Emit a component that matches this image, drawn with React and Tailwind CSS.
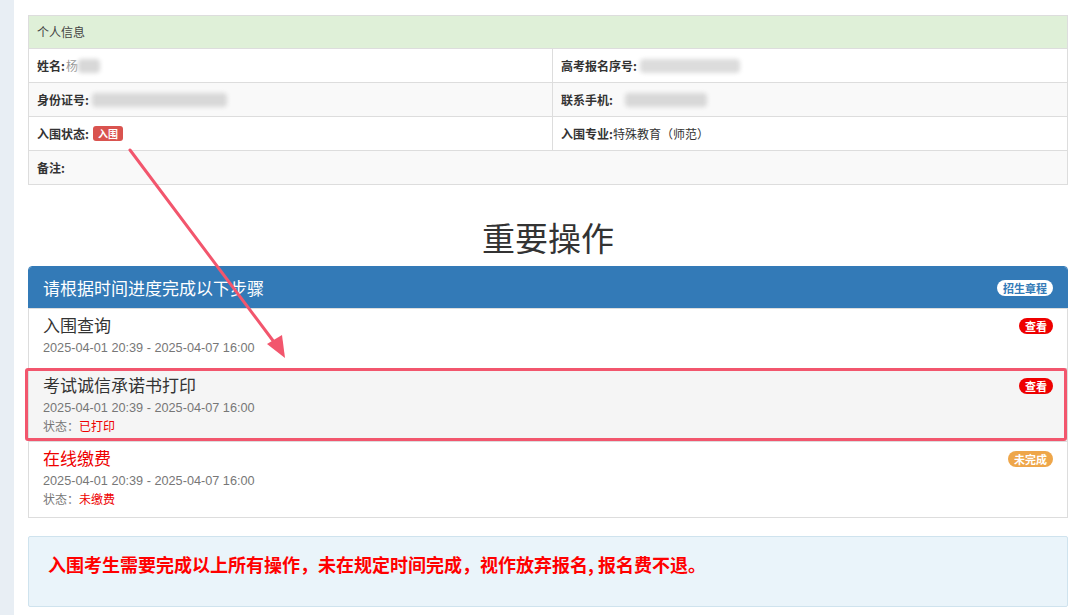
import React from 'react'

const font = { fontFamily: '"Noto Sans CJK SC", "Liberation Sans", sans-serif' }

function Blur({ w, shade = 'bg-[#d8d8d8]' }) {
  return <span className={`inline-block h-[14px] align-middle ${shade} blur-[2px] rounded-sm`} style={{ width: w }} />
}

function Cell({ children, className = '' }) {
  return <div className={`flex items-center h-[33px] px-2 text-[12px] text-[#333] ${className}`}>{children}</div>
}

function Step({ title, titleColor, badge, badgeColor, status, highlight, pb = 'pb-[10px]' }) {
  return (
    <div className={`relative px-[14px] pt-[5px] ${pb} border-t border-[#ddd] ${highlight ? 'bg-[#f5f5f5]' : 'bg-white'}`}>
      <div className="flex items-start justify-between">
        <div className={`text-[17px] leading-[22px] ${titleColor}`}>{title}</div>
        <span className={`mt-[4px] px-[6px] h-[16px] leading-[16px] rounded-full text-[11px] font-bold text-white ${badgeColor}`}>{badge}</span>
      </div>
      <div className="mt-[4px] text-[12.7px] leading-[17px] text-[#777]" style={{ fontFamily: '"Liberation Sans", "Noto Sans CJK SC", sans-serif' }}>
        2025-04-01 20:39 - 2025-04-07 16:00
      </div>
      {status && (
        <div className="text-[12px] leading-[17px] text-[#777]">
          状态：<span className="text-[#e00]">{status}</span>
        </div>
      )}
      {highlight && (
        <div className="absolute -left-[4px] right-0 -top-[1px] bottom-0 border-[3px] border-[#f2566d] rounded-[3px] pointer-events-none" />
      )}
    </div>
  )
}

export default function App() {
  return (
    <div className="relative flex min-h-[615px] bg-white overflow-hidden" style={font}>
      <div className="w-[14px] shrink-0 bg-[#e8eef4]" />
      <div className="flex-1 pl-[14px] pr-[12px] pt-[15px]">
        {/* 个人信息 */}
        <div className="border border-[#ddd]">
          <div className="h-[32px] flex items-center px-2 bg-[#dff0d8] text-[12px] text-[#444]">个人信息</div>
          <div className="grid grid-cols-[523px_1fr] border-t border-[#ddd] bg-white">
            <Cell className="font-bold">姓名:<span className="font-normal text-[#999] ml-[1px]">杨</span><Blur w={22} /></Cell>
            <Cell className="border-l border-[#ddd] font-bold">高考报名序号:<span className="ml-[3px]" /><Blur w={100} shade="bg-[#dcdcdc]" /></Cell>
          </div>
          <div className="grid grid-cols-[523px_1fr] border-t border-[#ddd] bg-[#f9f9f9]">
            <Cell className="font-bold">身份证号:<span className="ml-[3px]" /><Blur w={135} /></Cell>
            <Cell className="border-l border-[#ddd] font-bold">联系手机:<span className="ml-[12px]" /><Blur w={82} /></Cell>
          </div>
          <div className="grid grid-cols-[523px_1fr] border-t border-[#ddd] bg-white">
            <Cell className="font-bold">
              入围状态:
              <span className="ml-[4px] px-[5px] h-[15px] leading-[15px] rounded-[3px] bg-[#d9534f] text-white text-[10px]">入围</span>
            </Cell>
            <Cell className="border-l border-[#ddd]"><span className="font-bold">入围专业:</span>特殊教育（师范）</Cell>
          </div>
          <div className="border-t border-[#ddd] bg-[#f9f9f9]">
            <Cell className="font-bold">备注:</Cell>
          </div>
        </div>

        <h1 className="mt-[33px] mb-[10px] text-center text-[33px] leading-[38px] text-[#333]">重要操作</h1>

        {/* 步骤 */}
        <div className="border border-[#337ab7] rounded-t-[4px]">
          <div className="h-[41px] flex items-center justify-between pl-[14px] pr-[14px] bg-[#337ab7] rounded-t-[3px]">
            <span className="text-[17px] text-white">请根据时间进度完成以下步骤</span>
            <span className="px-[6px] h-[16px] leading-[16px] rounded-full bg-white text-[#337ab7] text-[11px] font-bold">招生章程</span>
          </div>
          <div className="border-x border-b border-[#ddd] -mx-px -mb-px">
            <Step title="入围查询" titleColor="text-[#333]" badge="查看" badgeColor="bg-[#e00]" pb="pb-[11px]" />
            <Step title="考试诚信承诺书打印" titleColor="text-[#333]" badge="查看" badgeColor="bg-[#e00]" status="已打印" highlight pb="pb-[7px]" />
            <Step title="在线缴费" titleColor="text-[#e00]" badge="未完成" badgeColor="bg-[#eea64a]" status="未缴费" pb="pb-[10px]" />
          </div>
        </div>

        <div className="mt-[18px] h-[71px] flex items-center pl-[19px] bg-[#eaf4fa] border border-[#cfe3ee] rounded-[2px]">
          <span className="text-[18px] font-bold text-[#f00] -mt-[14px]">入围考生需要完成以上所有操作，未在规定时间完成，视作放弃报名, 报名费不退。</span>
        </div>
      </div>

      {/* 标注箭头 */}
      <svg className="absolute left-0 top-0 pointer-events-none" width="1080" height="615">
        <line x1="130" y1="150" x2="277" y2="346" stroke="#f2566d" strokeWidth="3" strokeLinecap="round" />
        <polygon points="285,358 267,344 282,335" fill="#f2566d" />
      </svg>
    </div>
  )
}
